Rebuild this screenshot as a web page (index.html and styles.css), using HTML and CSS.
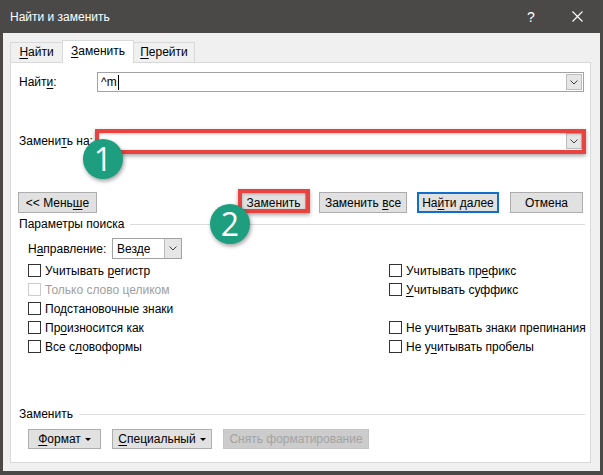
FILE: index.html
```html
<!DOCTYPE html>
<html lang="ru">
<head>
<meta charset="utf-8">
<title>Найти и заменить</title>
<link rel="stylesheet" href="styles.css">
</head>
<body>
<div class="window">
  <div class="titlebar">
    <span class="title">Найти и заменить</span>
    <span class="tb-btn help">?</span>
    <span class="tb-btn close"><svg width="11" height="11" viewBox="0 0 11 11"><path d="M0.5 0.5 L10.5 10.5 M10.5 0.5 L0.5 10.5" stroke="#ffffff" stroke-width="1.1" fill="none"/></svg></span>
  </div>
  <div class="client">
    <div class="tabs">
      <div class="tab tab-find"><u>Н</u>айти</div>
      <div class="tab tab-replace active"><u>З</u>аменить</div>
      <div class="tab tab-goto"><u>П</u>ерейти</div>
    </div>
    <div class="panel">
      <div class="field-row find-row">
        <span class="field-label">Найт<u>и</u>:</span>
        <div class="combo">
          <span class="combo-text"><span>^m</span><span class="caret"></span></span>
          <span class="combo-btn"><svg width="8" height="5" viewBox="0 0 8 5"><polyline points="0.5,0.5 4,4 7.5,0.5" fill="none" stroke="#404040" stroke-width="1"/></svg></span>
        </div>
      </div>
      <div class="field-row replace-row">
        <span class="field-label">Замени<u>т</u>ь на:</span>
        <div class="combo">
          <span class="combo-text"></span>
          <span class="combo-btn"><svg width="8" height="5" viewBox="0 0 8 5"><polyline points="0.5,0.5 4,4 7.5,0.5" fill="none" stroke="#404040" stroke-width="1"/></svg></span>
          <span class="hl-box hl-combo"></span>
          <span class="badge badge-1">1</span>
        </div>
      </div>
      <div class="button-row">
        <span class="btn btn-less"><span>&lt;&lt; Мень<u>ш</u>е</span></span>
        <span class="btn btn-replace"><span>За<u>м</u>енить</span><span class="hl-box hl-btn"></span><span class="badge badge-2">2</span></span>
        <span class="btn btn-replace-all"><span>Заменить <u>в</u>се</span></span>
        <span class="btn btn-next"><span>На<u>й</u>ти далее</span></span>
        <span class="btn btn-cancel"><span>Отмена</span></span>
      </div>
      <div class="group-head">
        <span>Параметры поиска</span><span class="group-line"></span>
      </div>
      <div class="direction-row">
        <span class="dir-label">Н<u>а</u>правление:</span>
        <div class="select">
          <span class="select-text">Везде</span>
          <span class="select-btn"><svg width="8" height="5" viewBox="0 0 8 5"><polyline points="0.5,0.5 4,4 7.5,0.5" fill="none" stroke="#404040" stroke-width="1"/></svg></span>
        </div>
      </div>
      <div class="options">
        <label class="opt"><span class="box"></span><span>Учитывать <u>р</u>егистр</span></label>
        <label class="opt"><span class="box"></span><span>Учитывать пр<u>е</u>фикс</span></label>
        <label class="opt disabled"><span class="box"></span><span>Только слово целиком</span></label>
        <label class="opt"><span class="box"></span><span><u>У</u>читывать суффикс</span></label>
        <label class="opt"><span class="box"></span><span>Подстановочные знаки</span></label>
        <span class="opt empty"></span>
        <label class="opt"><span class="box"></span><span>Пр<u>о</u>износится как</span></label>
        <label class="opt"><span class="box"></span><span>Не учит<u>ы</u>вать знаки препинания</span></label>
        <label class="opt"><span class="box"></span><span>Все с<u>л</u>овоформы</span></label>
        <label class="opt"><span class="box"></span><span>Не у<u>ч</u>итывать пробелы</span></label>
      </div>
      <div class="bottom">
        <div class="group-head bottom-head">
          <span>Заменить</span><span class="group-line"></span>
        </div>
        <div class="bottom-row">
          <span class="btn btn-format"><span><u>Ф</u>ормат</span><span class="tri"></span></span>
          <span class="btn btn-special"><span><u>С</u>пециальный</span><span class="tri"></span></span>
          <span class="btn btn-clear disabled"><span>Снять форматирование</span></span>
        </div>
      </div>
    </div>
  </div>
</div>
</body>
</html>
```

FILE: styles.css
```css
* { box-sizing: border-box; }
html, body {
  margin: 0;
  padding: 0;
  width: 603px;
  height: 475px;
  overflow: hidden;
  background: #4a4947;
  font-family: "Liberation Sans", Arial, sans-serif;
  font-size: 12px;
  color: #000;
}
u { text-decoration: underline; text-underline-offset: 2px; text-decoration-thickness: 1px; }

.window {
  width: 603px;
  height: 475px;
  display: flex;
  flex-direction: column;
  padding: 0 3px 4px 3px;
}

.titlebar {
  height: 33px;
  display: flex;
  align-items: center;
  color: #ffffff;
  padding-left: 7px;
}
.title { font-size: 12px; flex: 1; }
.tb-btn {
  width: 46px;
  height: 33px;
  display: flex;
  align-items: center;
  justify-content: center;
}
.help { font-size: 14px; font-weight: 300; }

.client {
  flex: 1;
  background: #f0f0f0;
  padding: 7px 9px 8px 7px;
  display: flex;
  flex-direction: column;
}

.tabs {
  height: 22px;
  display: flex;
  align-items: flex-end;
}
.tab {
  height: 20px;
  border: 1px solid #d9d9d9;
  border-bottom: none;
  background: #f0f0f0;
  text-align: center;
  line-height: 19px;
}
.tab-find { width: 53px; }
.tab-replace { width: 72px; margin-left: -1px; }
.tab-goto { width: 62px; margin-left: -1px; }
.tab.active {
  height: 23px;
  margin-bottom: -1px;
  background: #ffffff;
  position: relative;
  z-index: 1;
  line-height: 20px;
}

.panel {
  height: 401px;
  background: #ffffff;
  border: 1px solid #d9d9d9;
  padding: 0 6px 13px 8px;
  display: flex;
  flex-direction: column;
}

.field-row {
  height: 20px;
  display: flex;
  align-items: center;
}
.find-row { margin-top: 9px; }
.replace-row { margin-top: 39px; }
.field-label { width: 78px; white-space: nowrap; }

.combo {
  flex: 1;
  height: 20px;
  border: 1px solid #a2a2a2;
  display: flex;
  align-items: stretch;
  position: relative;
}
.combo-text {
  flex: 1;
  padding-left: 3px;
  display: flex;
  align-items: center;
}
.caret {
  display: inline-block;
  width: 1px;
  height: 15px;
  background: #000;
  margin-left: 1px;
}
.combo-btn {
  width: 16px;
  margin: 1px;
  background: #e6e6e6;
  border: 1px solid #bcbcbc;
  display: flex;
  align-items: center;
  justify-content: center;
}

.hl-box {
  position: absolute;
  border: 4px solid #e8433f;
  box-shadow: 0 2px 4px rgba(0,0,0,0.35), inset 0 1px 3px rgba(0,0,0,0.25);
  z-index: 2;
  pointer-events: none;
}
.hl-combo { left: -3px; top: -3px; right: -3px; bottom: -4px; }
.hl-btn { left: -4px; top: -4px; width: 72px; height: 24px; }

.badge {
  position: absolute;
  width: 40px;
  height: 40px;
  border-radius: 50%;
  background: #1c9e7f;
  color: #ffffff;
  font-family: "Open Sans", "Noto Sans", sans-serif;
  font-size: 32px;
  line-height: 40px;
  text-align: center;
  box-shadow: 1px 2px 4px rgba(0,0,0,0.4);
  z-index: 3;
}
.badge-1 { left: -15px; top: 7px; }
.badge-2 { left: -32px; top: 11px; }

.button-row {
  margin-top: 41px;
  height: 21px;
  display: flex;
}
.btn {
  height: 21px;
  background: #e1e1e1;
  border: 1px solid #adadad;
  display: flex;
  align-items: center;
  justify-content: center;
  white-space: nowrap;
  position: relative;
}
.btn-less { width: 79px; margin-left: -1px; }
.btn-replace { width: 65px; margin-left: 144px; }
.btn-replace-all { width: 88px; margin-left: 13px; }
.btn-next { width: 82px; margin-left: 10px; border: 2px solid #0f6fcb; }
.btn-cancel { width: 73px; margin-left: 11px; }

.group-head {
  height: 16px;
  margin-top: 3px;
  display: flex;
  align-items: center;
}
.group-line {
  flex: 1;
  height: 1px;
  background: #dcdcdc;
  margin-left: 6px;
  margin-right: -1px;
}

.direction-row {
  margin-top: 6px;
  height: 21px;
  display: flex;
  align-items: center;
  padding-left: 9px;
}
.dir-label { width: 84px; }
.select {
  width: 70px;
  height: 21px;
  border: 1px solid #a2a2a2;
  display: flex;
}
.select-text { flex: 1; padding-left: 4px; display: flex; align-items: center; }
.select-btn {
  width: 17px;
  background: #e6e6e6;
  border-left: 1px solid #bcbcbc;
  display: flex;
  align-items: center;
  justify-content: center;
}

.options {
  margin-top: 2px;
  padding-left: 9px;
  display: grid;
  grid-template-columns: 361px 1fr;
  grid-auto-rows: 19px;
}
.opt {
  display: flex;
  align-items: center;
  white-space: nowrap;
}
.box {
  width: 13px;
  height: 13px;
  border: 1px solid #333333;
  background: #ffffff;
  margin-right: 4px;
  flex: none;
}
.opt.disabled { color: #a0a0a0; }
.opt.disabled .box { border-color: #cccccc; }

.bottom { margin-top: auto; }
.bottom-head { margin-top: 0; }
.bottom-row {
  margin-top: 7px;
  display: flex;
  padding-left: 9px;
}
.bottom-row .btn { height: 20px; }
.btn-format { width: 73px; }
.btn-special { width: 100px; margin-left: 11px; }
.btn-clear { width: 146px; margin-left: 11px; }
.btn.disabled {
  background: #cccccc;
  border-color: #c4c4c4;
  color: #a3a3a3;
}
.tri {
  width: 0;
  height: 0;
  border-left: 3px solid transparent;
  border-right: 3px solid transparent;
  border-top: 3px solid #000;
  margin-left: 4px;
  margin-top: 1px;
}
```
